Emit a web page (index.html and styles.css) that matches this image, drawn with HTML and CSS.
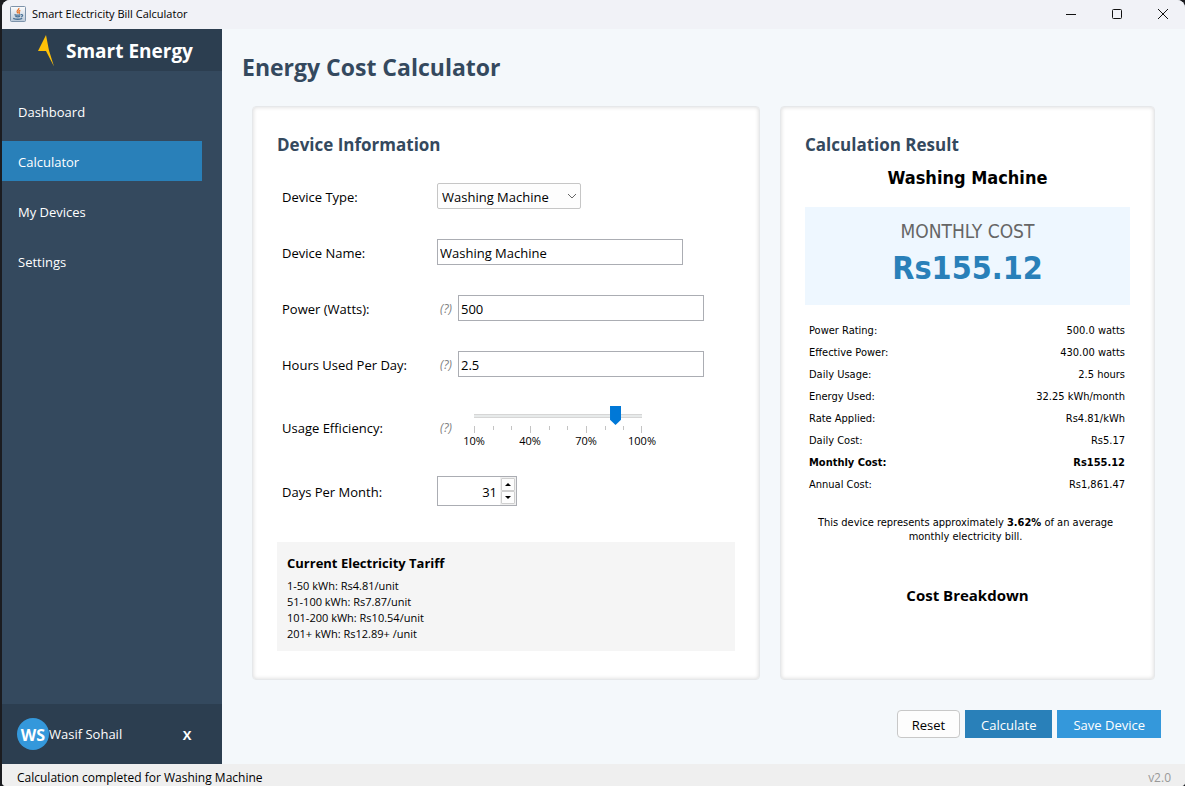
FILE: index.html
```html
<!DOCTYPE html>
<html lang="en">
<head>
<meta charset="utf-8">
<title>Smart Electricity Bill Calculator</title>
<link rel="stylesheet" href="styles.css">
</head>
<body>
<div class="window">
  <header class="titlebar">
    <svg class="app-icon" viewBox="0 0 16 16" aria-hidden="true">
      <defs><linearGradient id="tile" x1="0" y1="0" x2="0" y2="1"><stop offset="0" stop-color="#fdfdfd"/><stop offset="1" stop-color="#b9c8d8"/></linearGradient></defs>
      <rect x=".5" y=".5" width="15" height="15" rx="1" fill="url(#tile)" stroke="#7d93ab"/>
      <path d="M8.8 2c.8 1.600-2.600 2.300-1.600 4.100.3.500.7.900.7 1.400M10.300 4.300c-1.200.6-2 1.300-1.100 2.200.4.500.2.900-.2 1.200" fill="none" stroke="#e8762c" stroke-width="1.300"/>
      <path d="M4.500 8.600c1.800.7 4.400.6 6 0M5.300 10.400c1.500.5 3.400.5 4.800 0M3.200 12.300c2.400 1 6.800.9 9 0M11 8.700c2.200-.5 2.100 1.600.2 2.200" fill="none" stroke="#4b7397" stroke-width="1.300"/>
    </svg>
    <span class="app-title">Smart Electricity Bill Calculator</span>
    <div class="window-controls">
      <button type="button" aria-label="Minimize"><svg viewBox="0 0 12 12"><path d="M1 6.500h10"/></svg></button>
      <button type="button" aria-label="Maximize"><svg viewBox="0 0 12 12"><rect x="1.500" y="1.500" width="9" height="9" rx="1"/></svg></button>
      <button type="button" aria-label="Close"><svg viewBox="0 0 12 12"><path d="M1 1l10 10M11 1L1 11"/></svg></button>
    </div>
  </header>

  <div class="body">
    <aside class="sidebar">
      <div class="brand">
        <svg class="bolt" viewBox="0 0 16 32" aria-hidden="true"><path d="M8 0L11 15.500 16 31.500 8 16H0z" fill="#ffc107"/></svg>
        <span>Smart Energy</span>
      </div>
      <nav class="nav">
        <a href="#dashboard">Dashboard</a>
        <a href="#calculator" class="active" aria-current="page">Calculator</a>
        <a href="#devices">My Devices</a>
        <a href="#settings">Settings</a>
      </nav>
      <div class="user">
        <span class="avatar">WS</span>
        <span class="user-name">Wasif Sohail</span>
        <button type="button" class="logout" aria-label="Log out">X</button>
      </div>
    </aside>

    <main class="main">
      <h1>Energy Cost Calculator</h1>
      <div class="cards">
        <section class="card">
          <h2>Device Information</h2>
          <form class="form" id="device-form">
            <div class="row">
              <label for="type">Device Type:</label>
              <div class="select">
                <select id="type"><option>Washing Machine</option></select>
                <svg viewBox="0 0 10 6" aria-hidden="true"><path d="M1 1l4 4 4-4"/></svg>
              </div>
            </div>
            <div class="row">
              <label for="name">Device Name:</label>
              <input class="field" id="name" type="text" value="Washing Machine">
            </div>
            <div class="row">
              <label for="power">Power (Watts):</label>
              <span class="hint">(?)</span>
              <input class="field" id="power" type="text" value="500">
            </div>
            <div class="row">
              <label for="hours">Hours Used Per Day:</label>
              <span class="hint">(?)</span>
              <input class="field" id="hours" type="text" value="2.5">
            </div>
            <div class="row row-slider">
              <label for="efficiency">Usage Efficiency:</label>
              <span class="hint">(?)</span>
              <div class="slider">
                <input id="efficiency" type="range" min="10" max="100" value="86">
                <svg class="ticks" viewBox="0 0 170 8" aria-hidden="true"><path d="M.5 0v7M19.500 0v4M37.500 0v4M56.500 0v7M75.500 0v4M93.500 0v4M112.500 0v7M131.500 0v4M149.500 0v4M167.500 0v7"/></svg>
                <div class="scale"><span>10%</span><span>40%</span><span>70%</span><span>100%</span></div>
              </div>
            </div>
            <div class="row row-days">
              <label for="days">Days Per Month:</label>
              <div class="spinner">
                <input id="days" type="number" value="31" min="1" max="31">
                <div class="steps">
                  <button type="button" aria-label="Increase"><svg viewBox="0 0 6 3"><path d="M0 3l3-3 3 3z"/></svg></button>
                  <button type="button" aria-label="Decrease"><svg viewBox="0 0 6 3"><path d="M0 0l3 3 3-3z"/></svg></button>
                </div>
              </div>
            </div>
          </form>
          <div class="tariff">
            <h3>Current Electricity Tariff</h3>
            <ul>
              <li>1-50 kWh: Rs4.81/unit</li>
              <li>51-100 kWh: Rs7.87/unit</li>
              <li>101-200 kWh: Rs10.54/unit</li>
              <li>201+ kWh: Rs12.89+ /unit</li>
            </ul>
          </div>
        </section>

        <section class="card">
          <h2>Calculation Result</h2>
          <div class="result">
            <h3 class="result-name">Washing Machine</h3>
            <div class="cost">
              <div class="cost-label">MONTHLY COST</div>
              <div class="cost-value">Rs155.12</div>
            </div>
            <table class="details">
              <tbody>
                <tr><th scope="row">Power Rating:</th><td>500.0 watts</td></tr>
                <tr><th scope="row">Effective Power:</th><td>430.00 watts</td></tr>
                <tr><th scope="row">Daily Usage:</th><td>2.5 hours</td></tr>
                <tr><th scope="row">Energy Used:</th><td>32.25 kWh/month</td></tr>
                <tr><th scope="row">Rate Applied:</th><td>Rs4.81/kWh</td></tr>
                <tr><th scope="row">Daily Cost:</th><td>Rs5.17</td></tr>
                <tr class="total"><th scope="row">Monthly Cost:</th><td>Rs155.12</td></tr>
                <tr><th scope="row">Annual Cost:</th><td>Rs1,861.47</td></tr>
              </tbody>
            </table>
            <p class="share">This device represents approximately <b>3.62%</b> of an average monthly electricity bill.</p>
          </div>
          <h3 class="breakdown">Cost Breakdown</h3>
        </section>
      </div>
      <div class="actions">
        <button type="reset" form="device-form" class="btn btn-plain">Reset</button>
        <button type="button" class="btn btn-primary">Calculate</button>
        <button type="button" class="btn btn-secondary">Save Device</button>
      </div>
    </main>
  </div>

  <footer class="status">
    <span>Calculation completed for Washing Machine</span>
    <span class="version">v2.0</span>
  </footer>
</div>
</body>
</html>
```
FILE: styles.css
```css
* { box-sizing: border-box; }
body, h1, h2, h3, p, ul { margin: 0; padding: 0; }
body {
  background: #1b1c20;
  color: #000;
  font: 13px/20px "Open Sans", "Noto Sans", sans-serif;
}
button, input, select { font: inherit; color: inherit; margin: 0; }
button { cursor: pointer; }

.window {
  display: flex;
  flex-direction: column;
  min-height: 100vh;
  margin-left: 2px;
  background: #f4f8fb;
  border-radius: 8px 8px 4px 4px;
  overflow: hidden;
}

.titlebar {
  display: flex;
  align-items: center;
  height: 29px;
  padding-left: 8px;
  padding-bottom: 2px;
  background: #f1f2f7;
  font-size: 11px;
}
.app-icon { width: 16px; height: 16px; }
.app-title { margin-left: 6px; }
.window-controls { display: flex; margin-left: auto; }
.window-controls button {
  display: grid;
  place-items: center;
  width: 46px;
  height: 26px;
  padding: 0 0 0 2px;
  border: 0;
  background: none;
}
.window-controls svg {
  width: 12px;
  height: 12px;
  fill: none;
  stroke: #111;
}

.body { display: flex; flex: 1; }

.sidebar {
  display: flex;
  flex-direction: column;
  flex: none;
  width: 220px;
  background: #34495e;
  color: #fff;
}
.brand {
  display: flex;
  align-items: center;
  gap: 12px;
  height: 42px;
  padding: 2px 0 0 36px;
  background: #2c3e50;
  font-size: 19px;
  font-weight: 700;
}
.bolt { width: 16px; height: 32px; }
.nav {
  display: flex;
  flex-direction: column;
  gap: 10px;
  padding: 20px 20px 20px 0;
}
.nav a {
  padding: 11px 16px 9px;
  color: #fff;
  text-decoration: none;
}
.nav .active { background: #2980b9; }
.user {
  display: flex;
  align-items: center;
  height: 60px;
  margin-top: auto;
  padding: 0 26px 0 15px;
  background: #2c3e50;
}
.avatar {
  width: 32px;
  height: 32px;
  border-radius: 50%;
  background: #3498db;
  font-size: 16px;
  font-weight: 700;
  line-height: 34px;
  text-align: center;
}
.logout {
  width: 20px;
  margin-left: auto;
  padding: 2px 0 0 2px;
  border: 0;
  background: none;
  font-weight: 700;
}

.main {
  display: flex;
  flex: 1;
  flex-direction: column;
  padding: 20px 24px 26px 20px;
}
h1 {
  color: #34495e;
  font-size: 23px;
  line-height: 36px;
}
.cards {
  display: grid;
  flex: 1;
  grid-template-columns: 508fr 375fr;
  gap: 20px;
  padding: 21px 6px 30px 10px;
}
.card {
  padding: 24px;
  border: 1px solid #e6e8ea;
  border-radius: 4px;
  background: #fff;
  box-shadow: inset 0 0 4px #d8d8d8;
}
.card h2 {
  color: #34495e;
  font-size: 17px;
  line-height: 28px;
}

.form {
  display: flex;
  flex-direction: column;
  gap: 30px;
  padding: 24px 5px 36px;
}
.row { display: flex; align-items: center; height: 26px; }
.row label { flex: none; width: 155px; padding-top: 2px; }
.row-slider { height: 39px; }
.row-days { height: 30px; }
.select { display: grid; align-items: center; }
.select select, .select svg { grid-area: 1 / 1; }
.select select {
  appearance: none;
  width: 144px;
  height: 26px;
  padding: 2px 24px 0 4px;
  border: 1px solid #c6c6c6;
  border-radius: 2px;
  background: #fdfdfd;
}
.select svg {
  justify-self: end;
  width: 10px;
  height: 6px;
  margin-right: 4px;
  fill: none;
  stroke: #666;
  pointer-events: none;
}
.field {
  width: 246px;
  height: 26px;
  padding: 2px 2px 0;
  border: 1px solid #abadb3;
  border-radius: 0;
  background: #fff;
}
.hint {
  width: 21px;
  padding: 2px 0 0 3px;
  color: #808080;
  font-size: 12px;
  font-style: italic;
}
.slider { width: 200px; }
.slider input {
  display: block;
  appearance: none;
  width: 178px;
  height: 20px;
  margin-left: 11px;
  background: linear-gradient(#e7eaea, #e7eaea) 5px 9px / 168px 2px no-repeat,
    linear-gradient(#d6d6d6, #d6d6d6) 5px 8px / 168px 4px no-repeat;
}
.slider input::-webkit-slider-thumb {
  appearance: none;
  width: 11px;
  height: 19px;
  background: #0078d7;
  clip-path: polygon(0 0, 100% 0, 100% 73%, 50% 100%, 0 73%);
}
.ticks {
  display: block;
  width: 170px;
  height: 8px;
  margin-left: 16px;
  stroke: #c4c4c4;
}
.scale {
  display: grid;
  grid-template-columns: repeat(4, 56px);
  margin: 0 -12px;
  font-size: 11px;
  line-height: 14px;
  text-align: center;
}
.spinner {
  display: flex;
  width: 80px;
  height: 30px;
  border: 1px solid #abadb3;
  background: #f0f0f0;
}
.spinner input {
  appearance: textfield;
  width: 62px;
  padding: 2px 3px 0;
  border: 0;
  background: #fff;
  text-align: right;
}
.spinner input::-webkit-inner-spin-button { appearance: none; margin: 0; }
.steps { display: grid; flex: 1; padding: 1px; }
.steps button {
  display: grid;
  place-items: center;
  padding: 0;
  border: 1px solid #cfcfcf;
  border-radius: 1px;
  background: #fdfdfd;
}
.steps svg { width: 6px; height: 3px; }

.tariff { padding: 10px 10px 9px; background: #f5f5f5; }
.tariff h3 { font-size: 13px; line-height: 22px; }
.tariff ul {
  padding-top: 4px;
  font-size: 11px;
  line-height: 16px;
  list-style: none;
}

.result { font-family: "DejaVu Sans Condensed", "DejaVu Sans", sans-serif; }
.result-name {
  font-size: 18px;
  line-height: 38px;
  text-align: center;
}
.cost {
  margin-top: 10px;
  padding: 10px 0 14px;
  background: #eef7ff;
  text-align: center;
}
.cost-label { color: #666; font-size: 19px; line-height: 28px; }
.cost-value {
  color: #2980b9;
  font-size: 32px;
  font-weight: 700;
  line-height: 46px;
}
.details {
  width: 100%;
  margin-top: 15px;
  border-spacing: 0;
  font-size: 11px;
  line-height: 22px;
}
.details th { padding: 0 4px; font-weight: 400; text-align: left; }
.details td { padding: 0 5px; text-align: right; }
.details .total th, .details .total td { font-weight: 700; }
.share {
  padding: 20px 16px 0 12px;
  font-size: 11px;
  line-height: 14px;
  text-align: center;
}
.breakdown {
  margin-top: 40px;
  font-size: 15px;
  line-height: 22px;
  text-align: center;
}

.actions { display: flex; justify-content: flex-end; gap: 5px; }
.btn { height: 28px; padding: 2px 16px 0; border: 0; }
.btn-plain {
  padding: 2px 14px 0;
  border: 1px solid #c8c8c8;
  border-radius: 4px;
  background: #fdfdfd;
}
.btn-primary { background: #2980b9; color: #fff; }
.btn-secondary { background: #3498db; color: #fff; }

.status {
  display: flex;
  align-items: center;
  justify-content: space-between;
  height: 22px;
  padding: 5px 14px 0 15px;
  background: #efefef;
  font-size: 12px;
}
.version { color: #999; }
```
